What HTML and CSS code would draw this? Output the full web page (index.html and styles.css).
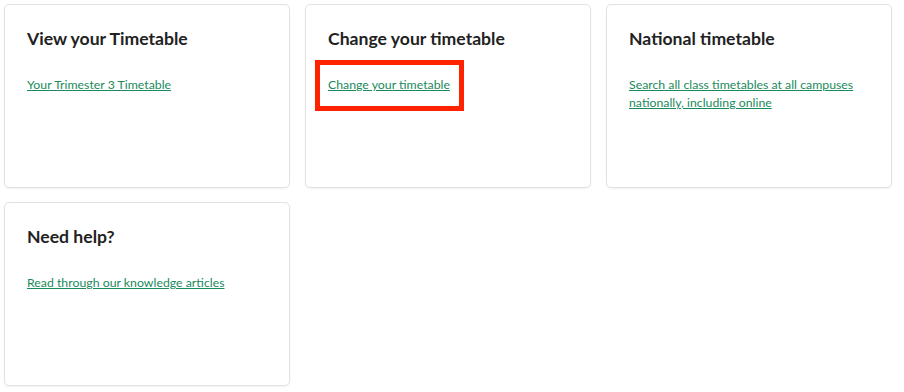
FILE: index.html
```html
<!DOCTYPE html>
<html lang="en">
<head>
    <meta charset="UTF-8">
    <meta name="viewport" content="width=device-width, initial-scale=1.0">
    <title>Timetables</title>
    <link rel="stylesheet" href="styles.css">
</head>
<body>
    <div class="cards">
        <!-- View timetable -->
        <div class="card">
            <h2>View your Timetable</h2>
            <p class="card-link"><a href="#">Your Trimester 3 Timetable</a></p>
        </div>

        <!-- Change timetable (highlighted) -->
        <div class="card">
            <h2>Change your timetable</h2>
            <p class="card-link"><span class="highlight"><a href="#">Change your timetable</a></span></p>
        </div>

        <!-- National -->
        <div class="card">
            <h2>National timetable</h2>
            <p class="card-link"><a href="#">Search all class timetables at all campuses nationally, including online</a></p>
        </div>

        <!-- Help -->
        <div class="card">
            <h2>Need help?</h2>
            <p class="card-link"><a href="#">Read through our knowledge articles</a></p>
        </div>
    </div>
</body>
</html>
```

FILE: styles.css
```css
* {
    margin: 0;
    padding: 0;
    box-sizing: border-box;
}

body {
    font-family: Lato, "Liberation Sans", sans-serif;
    background: #fff;
    color: #222;
    padding: 4px;
}

.cards {
    display: grid;
    grid-template-columns: repeat(3, 286px);
    grid-auto-rows: 184px;
    gap: 14px 15px;
}

.card {
    border: 1px solid #e2e2e2;
    border-radius: 5px;
    box-shadow: 0 1px 2px rgba(0,0,0,0.06);
    padding: 22px 22px;
}

.card h2 {
    font-size: 17.6px;
    font-weight: 700;
    line-height: 24px;
    color: #222;
    margin-bottom: 25px;
}

.card-link {
    font-size: 12.3px;
    line-height: 18px;
}

.card-link a {
    color: #1a8a5c;
    text-decoration: underline;
}

.highlight {
    position: relative;
    display: inline-block;
}

.highlight::after {
    content: "";
    position: absolute;
    top: -16px;
    bottom: -17px;
    left: -13px;
    right: -14px;
    border: 5px solid #ff2200;
}
```
